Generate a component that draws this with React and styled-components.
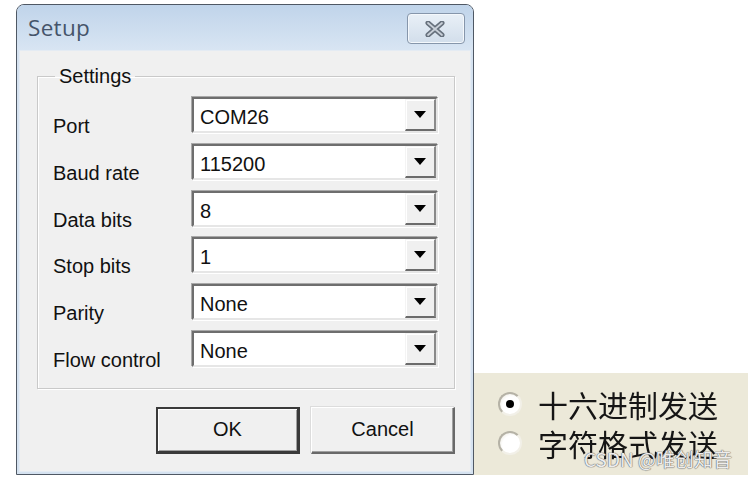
import React from 'react';
import styled, { createGlobalStyle } from 'styled-components';

// Estilos globales de la página
const GlobalStyle = createGlobalStyle`
  html, body {
    margin: 0;
    padding: 0;
    background: #ffffff;
  }
  body {
    font-family: "Liberation Sans", Arial, sans-serif;
  }
`;

const Page = styled.div`
  display: flex;
  align-items: flex-start;
  padding: 4px 0 0 16px;
  width: 748px;
  height: 481px;
  box-sizing: border-box;
  overflow: hidden;
`;

// Ventana del diálogo
const Window = styled.div`
  width: 458px;
  height: 471px;
  box-sizing: border-box;
  border: 1px solid #4f5864;
  border-radius: 8px 8px 0 0;
  background: #d5e2f0;
  display: flex;
  flex-direction: column;
  padding: 0 2px 2px 2px;
  box-shadow: inset 0 1px 0 #eef4fb;
`;

const TitleBar = styled.div`
  height: 45px;
  flex: none;
  display: flex;
  align-items: center;
  justify-content: space-between;
  padding: 0 8px 0 11px;
  margin: 0 -2px;
  background: linear-gradient(#c0d4ea, #d8e5f3);
  border-radius: 7px 7px 0 0;
`;

const TitleText = styled.span`
  font-family: "Open Sans", "Noto Sans", sans-serif;
  font-size: 22.5px;
  color: #45546a;
  letter-spacing: 0.3px;
`;

const CloseButton = styled.div`
  width: 58px;
  height: 31px;
  box-sizing: border-box;
  margin-top: 2px;
  border: 1px solid #8696ab;
  border-radius: 4px;
  background: linear-gradient(#e9f0f7, #d2deeb);
  box-shadow: inset 0 0 0 1px #f4f8fc;
  display: flex;
  align-items: center;
  justify-content: center;
  padding-right: 3px;
`;

const Client = styled.div`
  flex: 1;
  background: #f0f0f0;
  padding: 15px 16px 0 18px;
  display: flex;
  flex-direction: column;
  box-shadow: inset 0 0 0 1px #e4ebf3;
`;

const GroupBox = styled.fieldset`
  margin: 0;
  padding: 9px 16px 21px 15px;
  border: 1px solid #c9c9c9;
  box-shadow: 1px 1px 0 #ffffff, inset 1px 1px 0 #ffffff;
`;

const Legend = styled.legend`
  margin-left: 2px;
  padding: 0 4px;
  font-size: 20px;
  line-height: 23px;
  color: #111;
`;

const Fields = styled.div`
  display: grid;
  grid-template-columns: 139px 246px;
  row-gap: 10.8px;
`;

const Label = styled.div`
  font-size: 20px;
  line-height: 23px;
  height: 36px;
  box-sizing: border-box;
  padding-top: 18px;
  color: #111;
  white-space: nowrap;
`;

const Combo = styled.div`
  height: 36px;
  box-sizing: border-box;
  border-top: 2px solid #6e6e6e;
  border-left: 2px solid #6e6e6e;
  border-bottom: 2px solid #e6e6e6;
  border-right: 2px solid #e6e6e6;
  box-shadow: -1px -1px 0 #a9a9a9, 1px 1px 0 #ffffff;
  background: #ffffff;
  display: flex;
  align-items: stretch;
`;

const ComboValue = styled.div`
  flex: 1;
  padding: 7px 0 0 6px;
  font-size: 20px;
  line-height: 23px;
  color: #111;
`;

const DropButton = styled.div`
  width: 31px;
  box-sizing: border-box;
  background: #f0f0f0;
  border-top: 1px solid #f4f4f4;
  border-left: 1px solid #f4f4f4;
  border-bottom: 2px solid #6b6b6b;
  border-right: 2px solid #8a8a8a;
  box-shadow: inset 1px 1px 0 #ffffff;
  display: flex;
  align-items: center;
  justify-content: center;
`;

const Arrow = styled.span`
  width: 0;
  height: 0;
  border-left: 6px solid transparent;
  border-right: 6px solid transparent;
  border-top: 7px solid #000;
`;

const ButtonRow = styled.div`
  display: flex;
  justify-content: flex-end;
  gap: 11px;
  margin-top: 18px;
`;

const Button = styled.div`
  width: 144px;
  height: 47px;
  box-sizing: border-box;
  background: #f0f0f0;
  font-size: 20px;
  color: #111;
  display: flex;
  align-items: center;
  justify-content: center;
  border-top: ${p => (p.$default ? '2px solid #3a3a3a' : '1px solid #ffffff')};
  border-left: ${p => (p.$default ? '2px solid #3a3a3a' : '1px solid #ffffff')};
  border-bottom: ${p => (p.$default ? '3px solid #3a3a3a' : '2px solid #696969')};
  border-right: ${p => (p.$default ? '3px solid #3a3a3a' : '2px solid #696969')};
  box-shadow: ${p => (p.$default
    ? 'inset 1px 1px 0 #ffffff, inset -1px -1px 0 #a0a0a0'
    : 'inset -1px -1px 0 #a0a0a0, -1px -1px 0 #dcdcdc')};
`;

// Panel beige con los botones de radio
const SendPanel = styled.div`
  position: relative;
  margin-top: 369px;
  width: 274px;
  height: 102px;
  background: #ece9d9;
  padding: 13px 0 0 24px;
  box-sizing: border-box;
  display: flex;
  flex-direction: column;
  gap: 3px;
`;

const RadioRow = styled.div`
  display: flex;
  align-items: center;
  gap: 16px;
  height: 36px;
  font-family: "Noto Sans CJK SC", "Noto Sans", sans-serif;
  font-size: 30px;
  color: #151515;
  filter: blur(0.5px);
`;

const Radio = styled.span`
  width: 20px;
  height: 20px;
  flex: none;
  border-radius: 50%;
  background: radial-gradient(circle at 60% 60%, #ffffff 55%, #e6e3d6 100%);
  border: 2px solid #b5b2a6;
  border-right-color: #f2f0e8;
  border-bottom-color: #f2f0e8;
  display: flex;
  align-items: center;
  justify-content: center;
  &::after {
    content: '';
    width: 8px;
    height: 8px;
    border-radius: 50%;
    background: ${p => (p.$checked ? '#000' : 'transparent')};
  }
`;

const Watermark = styled.span`
  position: absolute;
  right: 16px;
  bottom: 3px;
  font-family: "Noto Sans CJK SC", "Noto Sans", sans-serif;
  font-size: 19px;
  color: rgba(255, 255, 255, 0.9);
  text-shadow: 0 0 1px #6f6f6f, 0 0 1px #6f6f6f, 0 0 1px #6f6f6f;
`;

const CloseIcon = () => (
  <svg width="22" height="16" viewBox="0 0 22 16">
    <path d="M4 2 L18 14 M18 2 L4 14" stroke="#66707c" strokeWidth="5" strokeLinecap="round" fill="none" />
    <path d="M4 2 L18 14 M18 2 L4 14" stroke="#c9d0d9" strokeWidth="1.8" strokeLinecap="round" fill="none" />
  </svg>
);

const settings = [
  { label: 'Port', value: 'COM26' },
  { label: 'Baud rate', value: '115200' },
  { label: 'Data bits', value: '8' },
  { label: 'Stop bits', value: '1' },
  { label: 'Parity', value: 'None' },
  { label: 'Flow control', value: 'None' },
];

const App = () => {
  return (
    <>
      <GlobalStyle />
      <Page>
        <Window>
          <TitleBar>
            <TitleText>Setup</TitleText>
            <CloseButton>
              <CloseIcon />
            </CloseButton>
          </TitleBar>
          <Client>
            <GroupBox>
              <Legend>Settings</Legend>
              <Fields>
                {settings.map(s => (
                  <React.Fragment key={s.label}>
                    <Label>{s.label}</Label>
                    <Combo>
                      <ComboValue>{s.value}</ComboValue>
                      <DropButton>
                        <Arrow />
                      </DropButton>
                    </Combo>
                  </React.Fragment>
                ))}
              </Fields>
            </GroupBox>
            <ButtonRow>
              <Button $default>OK</Button>
              <Button>Cancel</Button>
            </ButtonRow>
          </Client>
        </Window>
        <SendPanel>
          <RadioRow>
            <Radio $checked />
            十六进制发送
          </RadioRow>
          <RadioRow>
            <Radio />
            字符格式发送
          </RadioRow>
          <Watermark>CSDN @唯创知音</Watermark>
        </SendPanel>
      </Page>
    </>
  );
};

export default App;
